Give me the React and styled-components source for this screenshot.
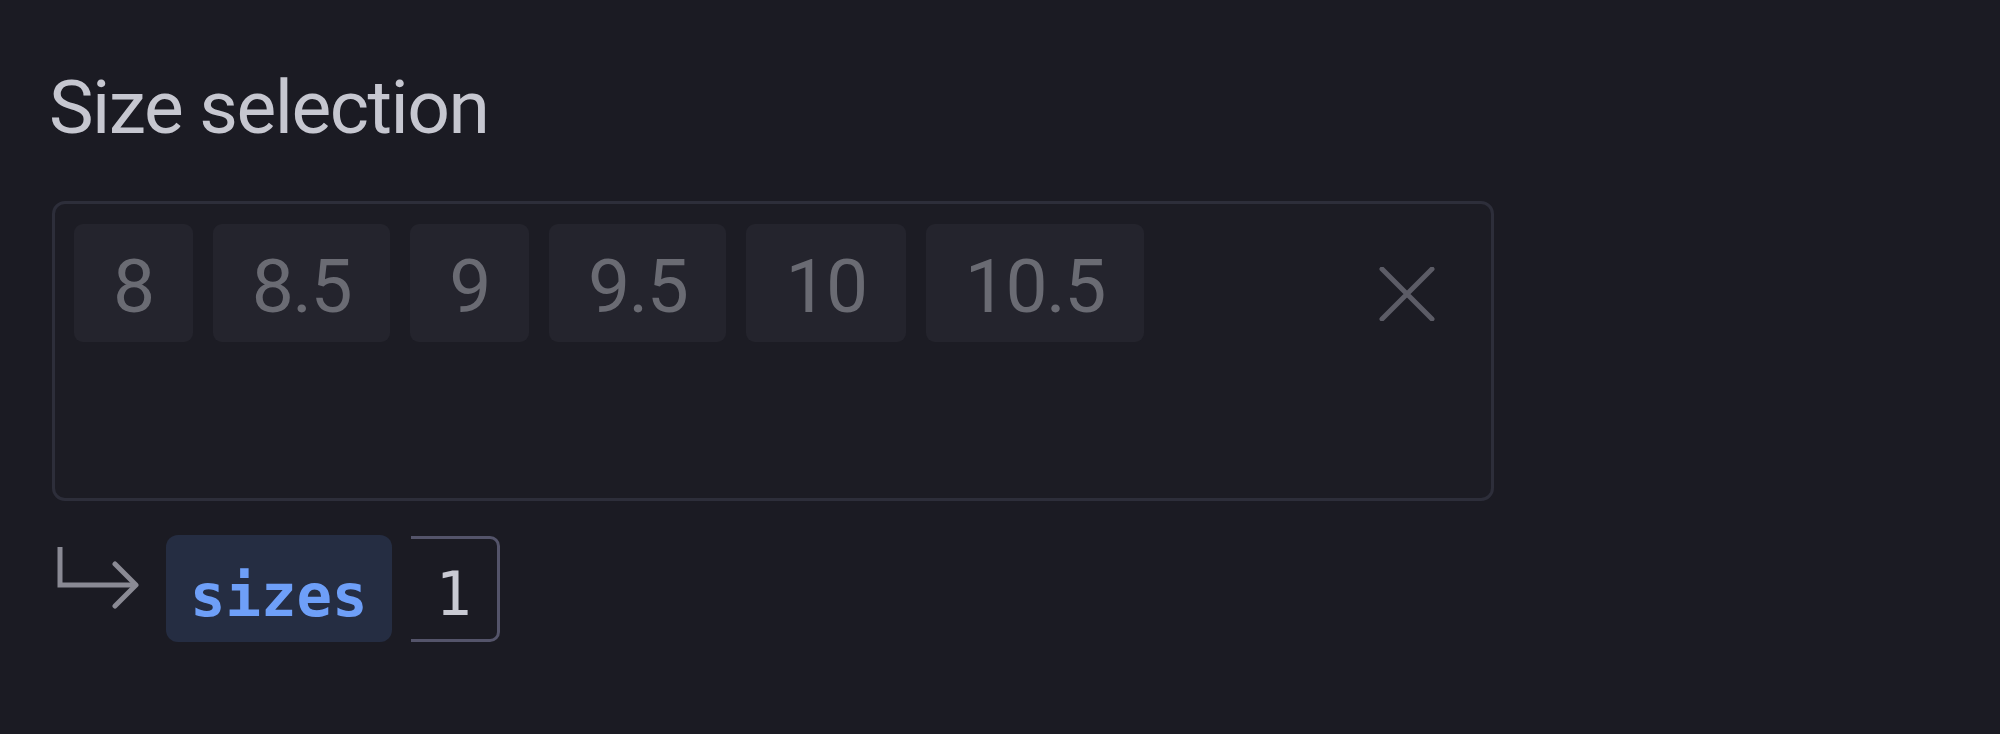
import React from 'react'
import { styled, createGlobalStyle } from 'styled-components'

const GlobalStyle = createGlobalStyle`
  html, body {
    margin: 0;
    padding: 0;
    background: #1b1b23;
  }
`

const Page = styled.div`
  min-height: 734px;
  box-sizing: border-box;
  padding: 63px 0 0 52px;
  background: #1b1b23;
  font-family: Roboto, "Noto Sans", sans-serif;
`

const Title = styled.h2`
  margin: 0 0 0 -3px;
  font-size: 75px;
  line-height: 89px;
  font-weight: 400;
  letter-spacing: -1.5px;
  color: #c6c7d0;
`

const InputBox = styled.div`
  margin-top: 49px;
  width: 1442px;
  height: 300px;
  box-sizing: border-box;
  border: 3px solid #2d2e3a;
  border-radius: 13px;
  background: #1c1c24;
  display: flex;
  align-items: flex-start;
  padding: 20px 56px 20px 19px;
`

const Chips = styled.div`
  flex: 1;
  display: flex;
  flex-wrap: wrap;
  gap: 20px;
`

const Chip = styled.div`
  height: 118px;
  box-sizing: border-box;
  padding: 6px 39px 0;
  display: flex;
  align-items: center;
  border-radius: 9px;
  background: #24242d;
  color: #6a6b73;
  font-size: 75px;
  letter-spacing: -1.5px;
`

const ClearButton = styled.button`
  margin-top: 43px;
  width: 56px;
  height: 54px;
  padding: 0;
  border: none;
  background: none;
  display: flex;
  cursor: pointer;
`

const Output = styled.div`
  margin-top: 34px;
  display: flex;
  align-items: center;
`

const Arrow = styled.svg`
  margin-left: 3px;
  margin-right: 27px;
  align-self: flex-start;
  margin-top: 10px;
`

const VarBadge = styled.div`
  height: 107px;
  box-sizing: border-box;
  padding: 14px 24px 0;
  display: flex;
  align-items: center;
  border-radius: 12px;
  background: #252d42;
  color: #6e9ff8;
  font-family: "DejaVu Sans Mono", "Liberation Mono", monospace;
  font-weight: 700;
  font-size: 59px;
`

const Count = styled.div`
  margin-left: 19px;
  width: 89px;
  height: 106px;
  box-sizing: border-box;
  padding-top: 10px;
  border: 3px solid #54546a;
  border-left: none;
  border-radius: 0 10px 10px 0;
  display: flex;
  align-items: center;
  justify-content: center;
  color: #c9cad3;
  font-family: "DejaVu Sans Mono", "Liberation Mono", monospace;
  font-size: 60px;
`

const sizes = ['8', '8.5', '9', '9.5', '10', '10.5']

const App = () => {
  return (
    <Page>
      <GlobalStyle />
      <Title>Size selection</Title>
      <InputBox>
        <Chips>
          {sizes.map((s) => (
            <Chip key={s}>{s}</Chip>
          ))}
        </Chips>
        <ClearButton aria-label="Clear">
          <svg width="56" height="54" viewBox="0 0 56 54">
            <path d="M3 2 L53 52 M53 2 L3 52" stroke="#5c5c66" strokeWidth="5" strokeLinecap="round" />
          </svg>
        </ClearButton>
      </InputBox>
      <Output>
        <Arrow width="84" height="66" viewBox="0 0 84 66">
          <path d="M5 2 V40 H80" fill="none" stroke="#8a8a94" strokeWidth="5" />
          <path d="M60 19 L81 40 L60 61" fill="none" stroke="#8a8a94" strokeWidth="5" strokeLinecap="round" strokeLinejoin="round" />
        </Arrow>
        <VarBadge>sizes</VarBadge>
        <Count>1</Count>
      </Output>
    </Page>
  )
}

export default App
